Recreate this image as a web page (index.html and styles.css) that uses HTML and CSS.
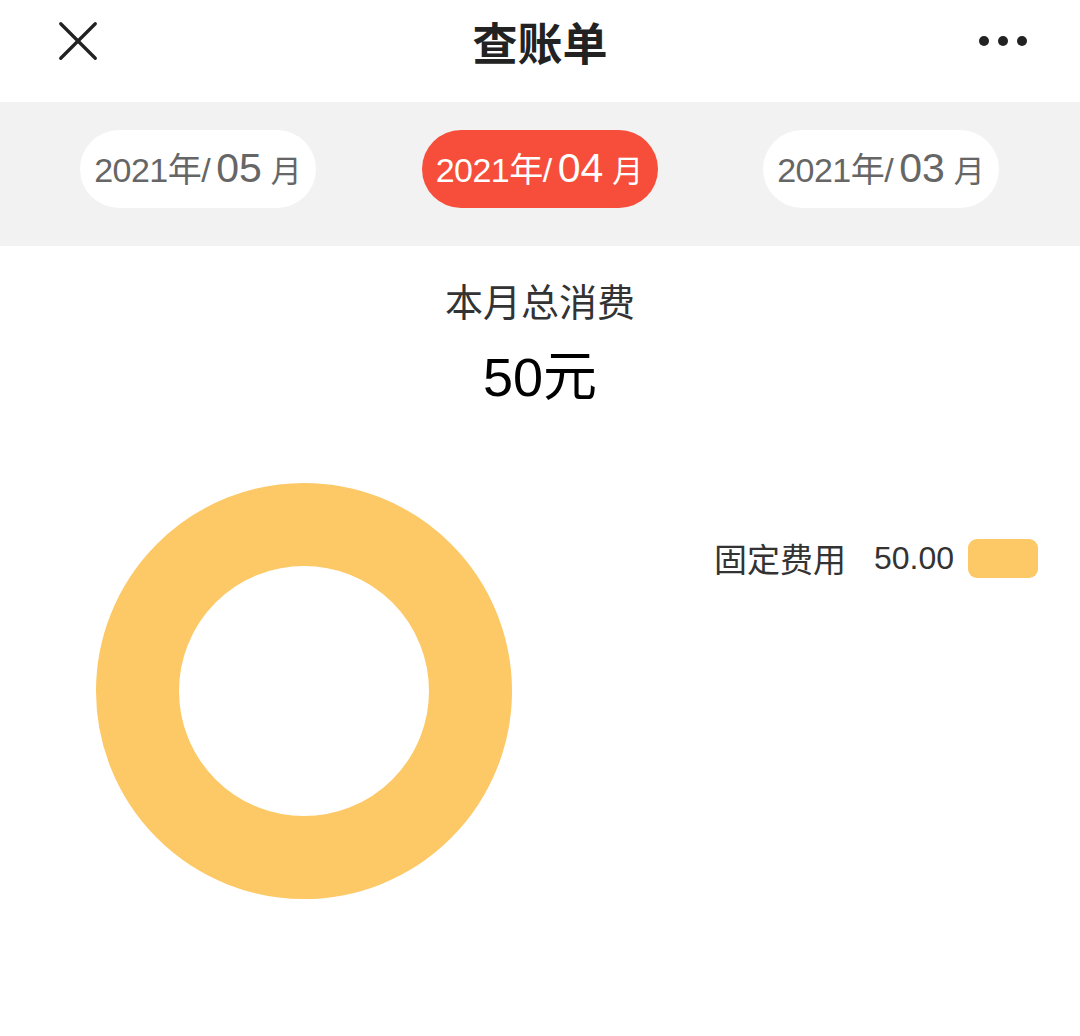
FILE: index.html
```html
<!DOCTYPE html>
<html lang="zh-CN">
<head>
    <meta charset="UTF-8">
    <meta name="viewport" content="width=device-width, initial-scale=1.0">
    <title>查账单</title>
    <link rel="stylesheet" href="styles.css">
</head>
<body>
    <header class="top-bar">
        <button class="icon-btn close-btn" aria-label="关闭">
            <svg width="44" height="44" viewBox="0 0 44 44">
                <path d="M3 3 L41 41 M41 3 L3 41" stroke="#222" stroke-width="3.6" stroke-linecap="round" fill="none"/>
            </svg>
        </button>
        <h1 class="title">查账单</h1>
        <button class="icon-btn more-btn" aria-label="更多">
            <svg width="50" height="12" viewBox="0 0 50 12">
                <circle cx="6" cy="6" r="5" fill="#222"/>
                <circle cx="25" cy="6" r="5" fill="#222"/>
                <circle cx="44" cy="6" r="5" fill="#222"/>
            </svg>
        </button>
    </header>

    <nav class="month-bar">
        <div class="month-pill"><span class="year">2021年/</span><span class="mon">05</span><span class="unit">月</span></div>
        <div class="month-pill active"><span class="year">2021年/</span><span class="mon">04</span><span class="unit">月</span></div>
        <div class="month-pill"><span class="year">2021年/</span><span class="mon">03</span><span class="unit">月</span></div>
    </nav>

    <section class="summary">
        <p class="summary-label">本月总消费</p>
        <p class="summary-total">50元</p>
    </section>

    <section class="chart">
        <div class="donut"></div>
        <ul class="legend">
            <li class="legend-item">
                <span class="legend-name">固定费用</span>
                <span class="legend-value">50.00</span>
                <span class="legend-swatch"></span>
            </li>
        </ul>
    </section>
</body>
</html>
```

FILE: styles.css
```css
:root {
    --accent-red: #f64e3b;
    --chart-yellow: #fdc866;
    --band-gray: #f2f2f2;
    --text-dark: #222;
    --text-gray: #666;
}

* {
    box-sizing: border-box;
}

body {
    margin: 0;
    width: 1080px;
    height: 1036px;
    background: #fff;
    font-family: "Liberation Sans", "Noto Sans CJK SC", sans-serif;
    color: var(--text-dark);
}

.top-bar {
    height: 102px;
    display: flex;
    align-items: center;
    justify-content: space-between;
    padding: 0 52px 20px 58px;
}

.icon-btn {
    background: none;
    border: none;
    padding: 0;
    display: flex;
    align-items: center;
    cursor: pointer;
}

.close-btn {
    width: 40px;
    height: 40px;
}

.close-btn svg {
    width: 40px;
    height: 40px;
}

.title {
    margin: 0 0 0 4px;
    font-family: "Noto Sans CJK SC", sans-serif;
    font-size: 45px;
    font-weight: 700;
    line-height: 1;
    color: var(--text-dark);
}

.month-bar {
    background: var(--band-gray);
    height: 144px;
    display: flex;
    align-items: flex-start;
    justify-content: space-between;
    padding: 28px 81px 0 80px;
}

.month-pill {
    width: 236px;
    height: 78px;
    border-radius: 39px;
    background: #fff;
    color: var(--text-gray);
    display: flex;
    align-items: baseline;
    justify-content: center;
    padding-top: 18px;
    line-height: 1;
}

.month-pill.active {
    background: var(--accent-red);
    color: #fff;
}

.month-pill .year {
    font-size: 34px;
    letter-spacing: -0.5px;
}

.month-pill .mon {
    font-size: 41px;
    margin-left: 6px;
}

.month-pill .unit {
    font-family: "Noto Sans CJK SC", sans-serif;
    font-size: 31px;
    margin-left: 9px;
}

.summary {
    text-align: center;
    padding-top: 32px;
}

.summary-label {
    margin: 0;
    font-family: "Noto Sans CJK SC", sans-serif;
    font-size: 38px;
    line-height: 44px;
    color: #333;
}

.summary-total {
    margin: 27px 0 0;
    font-size: 54px;
    line-height: 56px;
    color: #000;
}

.chart {
    display: flex;
    align-items: flex-start;
    padding: 78px 42px 0 96px;
}

.donut {
    width: 416px;
    height: 416px;
    border-radius: 50%;
    border: 83px solid var(--chart-yellow);
    flex-shrink: 0;
}

.legend {
    list-style: none;
    margin: 51px 0 0 auto;
    padding: 0;
}

.legend-item {
    display: flex;
    align-items: center;
    color: #333;
}

.legend-name {
    font-family: "Noto Sans CJK SC", sans-serif;
    font-size: 33px;
}

.legend-value {
    font-size: 32px;
    margin-left: 28px;
}

.legend-swatch {
    width: 70px;
    height: 39px;
    border-radius: 9px;
    background: var(--chart-yellow);
    margin-left: 14px;
}
```
